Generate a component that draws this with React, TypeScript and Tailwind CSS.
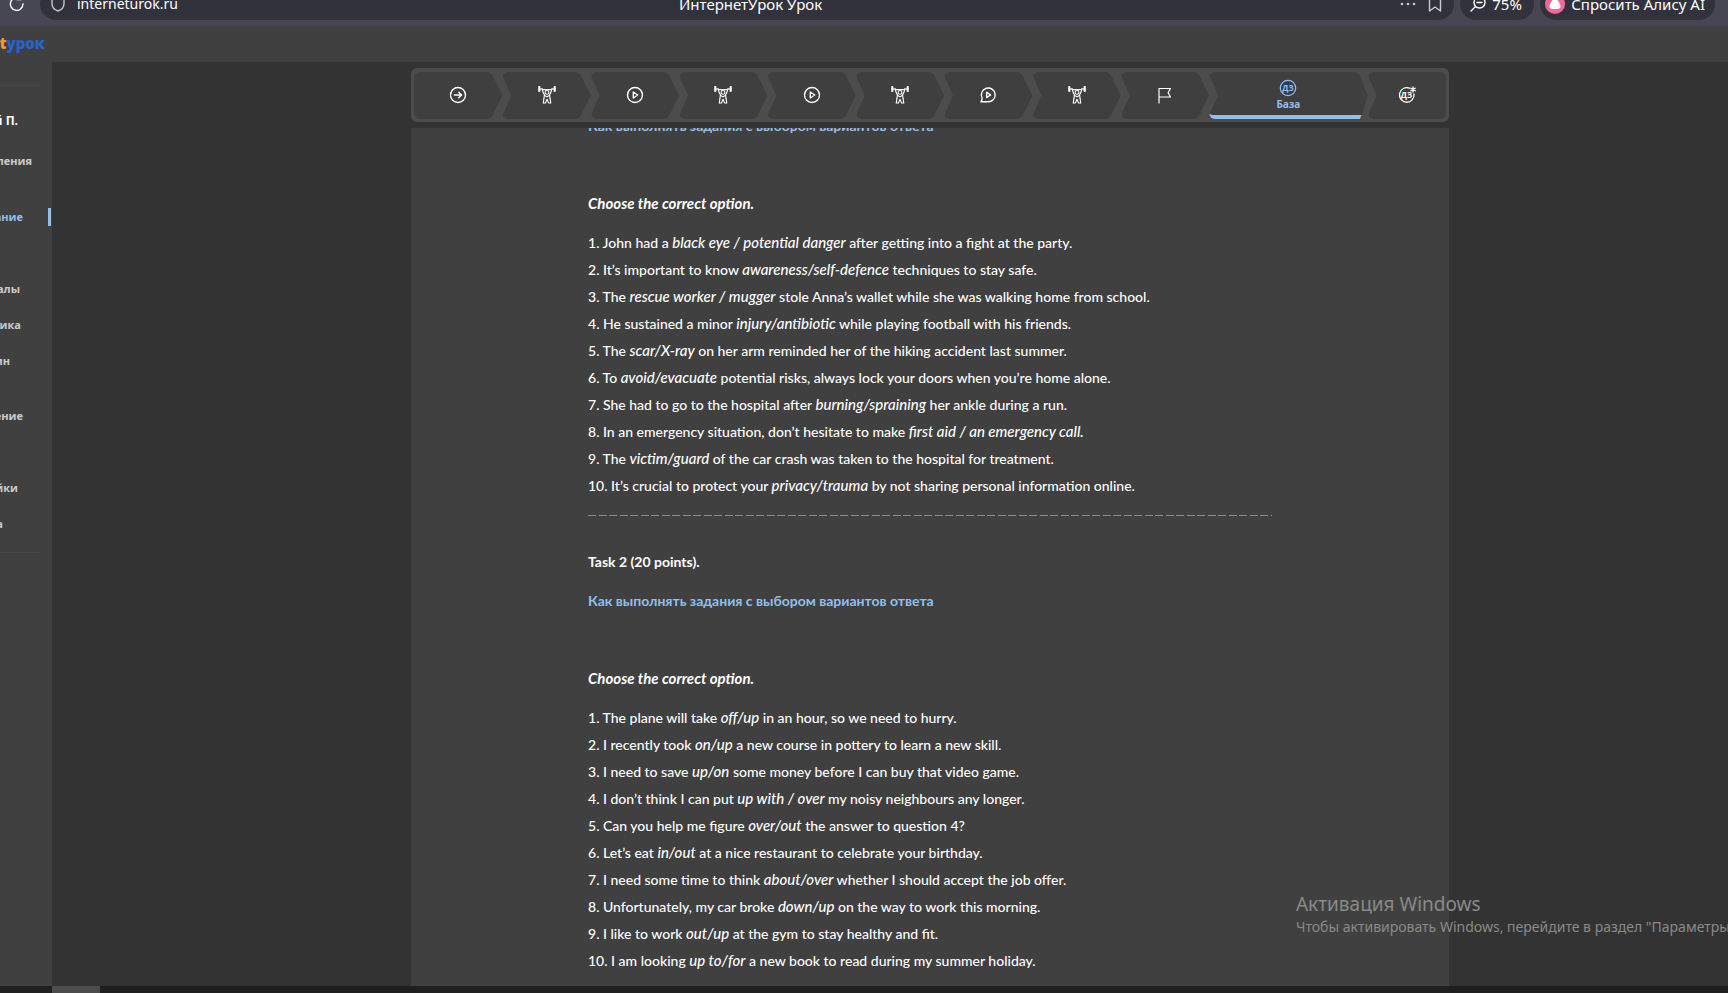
import React from "react";

type Part = [string, string, string];

const taskOne: Part[] = [
  ["John had a ", "black eye / potential danger", " after getting into a fight at the party."],
  ["It’s important to know ", "awareness/self-defence", " techniques to stay safe."],
  ["The ", "rescue worker / mugger", " stole Anna’s wallet while she was walking home from school."],
  ["He sustained a minor ", "injury/antibiotic", " while playing football with his friends."],
  ["The ", "scar/X-ray", " on her arm reminded her of the hiking accident last summer."],
  ["To ", "avoid/evacuate", " potential risks, always lock your doors when you’re home alone."],
  ["She had to go to the hospital after ", "burning/spraining", " her ankle during a run."],
  ["In an emergency situation, don’t hesitate to make ", "first aid / an emergency call.", ""],
  ["The ", "victim/guard", " of the car crash was taken to the hospital for treatment."],
  ["It’s crucial to protect your ", "privacy/trauma", " by not sharing personal information online."],
];

const taskTwo: Part[] = [
  ["The plane will take ", "off/up", " in an hour, so we need to hurry."],
  ["I recently took ", "on/up", " a new course in pottery to learn a new skill."],
  ["I need to save ", "up/on", " some money before I can buy that video game."],
  ["I don’t think I can put ", "up with / over", " my noisy neighbours any longer."],
  ["Can you help me figure ", "over/out", " the answer to question 4?"],
  ["Let’s eat ", "in/out", " at a nice restaurant to celebrate your birthday."],
  ["I need some time to think ", "about/over", " whether I should accept the job offer."],
  ["Unfortunately, my car broke ", "down/up", " on the way to work this morning."],
  ["I like to work ", "out/up", " at the gym to stay healthy and fit."],
  ["I am looking ", "up to/for", " a new book to read during my summer holiday."],
];

const stroke = {
  fill: "none",
  stroke: "currentColor",
  strokeWidth: 1.4,
  strokeLinecap: "round" as const,
  strokeLinejoin: "round" as const,
};

function ArrowIcon() {
  return (
    <svg viewBox="0 0 18 18" className="size-[18px]" {...stroke}>
      <circle cx="9" cy="9" r="7.5" />
      <path d="M5.5 9h7M9.8 6.2 12.6 9l-2.8 2.8" />
    </svg>
  );
}

function PlayIcon() {
  return (
    <svg viewBox="0 0 18 18" className="size-[18px]" {...stroke}>
      <circle cx="9" cy="9" r="7.5" />
      <path d="M7.3 6v6l4.4-3z" />
    </svg>
  );
}

function ChatPlayIcon() {
  return (
    <svg viewBox="0 0 18 18" className="size-[18px]" {...stroke}>
      <path d="M2 15.8h7.2A6.9 6.9 0 1 0 3 11.8c.3 1.4-.2 2.8-1 4z" />
      <path d="M7.6 6.2v5.4l4-2.7z" />
    </svg>
  );
}

function LifterIcon() {
  return (
    <svg viewBox="0 0 18 18" className="size-[18px]" {...stroke} strokeWidth={1.1}>
      <path d="M1.3 1v4M16.700 1v4" strokeWidth="2.200" />
      <path d="M2 3h2.200M13.800 3H16" />
      <path d="M4 2.600l1.200 4 1.200 2-.4 3.600M14 2.600l-1.200 4-1.200 2 .4 3.600M5.400 3.600h7.200" />
      <circle cx="9" cy="6.400" r="1.900" />
      <path d="M6 12.200L5.200 17h2.200L9 13.200l1.600 3.800h2.200L12 12.200M6.600 9.600 9 10.800l2.400-1.200" />
    </svg>
  );
}

function FlagIcon() {
  return (
    <svg viewBox="0 0 18 18" className="size-[18px]" {...stroke} strokeWidth={1.2}>
      <path d="M3 17V2.500h11.500l-2.400 4.200 2.400 4.300H3" />
    </svg>
  );
}

function HomeworkIcon() {
  return (
    <svg viewBox="0 0 18 18" className="size-[18px]" {...stroke} strokeWidth={1.2}>
      <circle cx="9" cy="9" r="7.700" fill="#2f3b52" />
      <text x="9" y="12" textAnchor="middle" fontSize="8" fontWeight="700" fontFamily="Open Sans, sans-serif" fill="currentColor" stroke="none">ДЗ</text>
    </svg>
  );
}

function HomeworkStarIcon() {
  return (
    <svg viewBox="0 0 18 18" className="size-[18px]" {...stroke} strokeWidth={1.3}>
      <path d="M11.500 2.200A7.300 7.300 0 1 0 16 8" />
      <path d="M15 1v5M12.800 2.200l4.400 2.600M17.200 2.200l-4.400 2.600" />
      <text x="8.500" y="12.200" textAnchor="middle" fontSize="8" fontWeight="700" fontFamily="Open Sans, sans-serif" fill="currentColor" stroke="none">ДЗ</text>
    </svg>
  );
}

const steps = [
  { label: "Введение", icon: <ArrowIcon /> },
  { label: "Тренажёр 1", icon: <LifterIcon /> },
  { label: "Видео 1", icon: <PlayIcon /> },
  { label: "Тренажёр 2", icon: <LifterIcon /> },
  { label: "Видео 2", icon: <PlayIcon /> },
  { label: "Тренажёр 3", icon: <LifterIcon /> },
  { label: "Диалог", icon: <ChatPlayIcon /> },
  { label: "Тренажёр 4", icon: <LifterIcon /> },
  { label: "Итог", icon: <FlagIcon /> },
  { label: "База", icon: <HomeworkIcon />, active: true },
  { label: "Домашнее задание повышенной сложности", icon: <HomeworkStarIcon /> },
];

const chevronFirst =
  "[clip-path:polygon(0_0,calc(100%-14px)_0,calc(100%-10px)_3px,100%_50%,calc(100%-10px)_calc(100%-3px),calc(100%-14px)_100%,0_100%)]";
const chevron =
  "[clip-path:polygon(0_3px,4px_0,calc(100%-14px)_0,calc(100%-10px)_3px,100%_50%,calc(100%-10px)_calc(100%-3px),calc(100%-14px)_100%,4px_100%,0_calc(100%-3px),9px_50%)]";
const chevronActive =
  "[clip-path:polygon(0_3px,4px_0,calc(100%-12px)_0,calc(100%-8px)_3px,100%_50%,calc(100%-6px)_calc(100%-4px),calc(100%-8px)_100%,3px_100%,0_calc(100%-4px),9px_50%)]";
const chevronLast =
  "[clip-path:polygon(0_3px,4px_0,100%_0,100%_100%,4px_100%,0_calc(100%-3px),9px_50%)]";

function Stepper() {
  return (
    <nav className="grid h-[54px] grid-cols-[repeat(9,88fr)_158fr_78fr] rounded-md bg-[#4c4c4c] px-[3px] pt-1 pb-[3px]">
      {steps.map((s, i) => (
        <button
          key={i}
          aria-label={s.label}
          className={`flex flex-col items-center justify-center rounded-md bg-[#3f3f3f] ${
            i === 0 ? chevronFirst : i === steps.length - 1 ? chevronLast : s.active ? chevronActive : chevron
          } ${s.active ? "border-b-4 border-[#94bfe8] pt-[2px] text-[#94bfe8]" : "pb-[2px] text-white"}`}
        >
          {s.icon}
          {s.active && <span className="text-[10px] leading-[14px] font-bold">{s.label}</span>}
        </button>
      ))}
    </nav>
  );
}

function Questions({ items }: { items: Part[] }) {
  return (
    <ol className="mt-3 font-medium">
      {items.map(([before, choice, after], i) => (
        <li key={i} className="h-[27px]">
          {i + 1}. {before}
          <em className="text-[15px]">{choice}</em>
          {after}
        </li>
      ))}
    </ol>
  );
}

function HelpLink() {
  return (
    <a href="#help" className="font-bold text-[#94bfe8]">
      Как выполнять задания с выбором вариантов ответа
    </a>
  );
}

function BrowserBar() {
  return (
    <div className="h-[26px] shrink-0 overflow-hidden bg-[#474753] font-['Noto_Sans',sans-serif] text-[15px] leading-5 text-white">
      <div className="-mt-3 flex h-8 items-stretch gap-[6px] pr-[13px]">
        <button aria-label="Обновить" className="flex w-[34px] items-center justify-center">
          <svg viewBox="0 0 16 16" className="size-4" {...stroke}>
            <path d="M14 8A6.300 6.300 0 1 1 11.500 3M11.800 0v3.600H8" />
          </svg>
        </button>
        <div className="flex flex-1 items-center gap-3 rounded-full bg-[#32323c] pl-[11px] pr-3">
          <svg viewBox="0 0 14 16" className="h-4 w-[14px] text-[#c8c8d0]" {...stroke}>
            <path d="M7 1l6 1.500v5c0 4-3 6.500-6 7.500-3-1-6-3.500-6-7.500v-5z" />
          </svg>
          <span className="w-[590px] text-[14px]">interneturok.ru</span>
          <span className="flex-1">ИнтернетУрок Урок</span>
          <button aria-label="Ещё" className="text-[#c8c8d0]">
            <svg viewBox="0 0 16 4" className="h-1 w-4" fill="currentColor">
              <circle cx="2" cy="2" r="1.300" />
              <circle cx="8" cy="2" r="1.300" />
              <circle cx="14" cy="2" r="1.300" />
            </svg>
          </button>
          <button aria-label="Закладка" className="text-[#c8c8d0]">
            <svg viewBox="0 0 14 18" className="h-[18px] w-[14px]" {...stroke}>
              <path d="M1.500 1h11v15L7 12l-5.500 4z" />
            </svg>
          </button>
        </div>
        <button className="flex w-[74px] items-center gap-[6px] rounded-full bg-[#32323c] pl-[10px]">
          <svg viewBox="0 0 16 16" className="size-4" {...stroke}>
            <circle cx="9.500" cy="6.500" r="5.500" />
            <path d="M5.500 10.500L1 15M7 6.500h5" />
          </svg>
          75%
        </button>
        <button className="flex items-center gap-[6px] rounded-full bg-[#32323c] pr-[10px] pl-[5px]">
          <svg viewBox="0 0 20 20" className="size-5">
            <circle cx="10" cy="10" r="10" fill="#ef6a9b" />
            <path d="M10 4c2 0 6 7 5.500 9S13 15 10 15s-5 0-5.500-2S8 4 10 4z" fill="#fff" />
          </svg>
          Спросить Алису AI
        </button>
      </div>
    </div>
  );
}

const menu = [
  { text: "Дмитрий П.", box: "mt-[25px] text-[12px] text-white pr-[34px]" },
  { text: "Уведомления", box: "mt-5 pr-5" },
  { text: "Расписание", box: "mt-9 text-[#94bfe8] pr-[29px]", active: true },
  { text: "Материалы", box: "mt-[52px] pr-8" },
  { text: "Статистика", box: "mt-4 pr-[31px]" },
  { text: "Магазин", box: "mt-4 pr-[42px]" },
  { text: "Обучение", box: "mt-[35px] pr-[29px]" },
  { text: "Настройки", box: "mt-[52px] pr-[34px]" },
  { text: "Справка", box: "mt-4 pr-[49px]" },
];

export default function App() {
  return (
    <div className="flex h-screen flex-col overflow-hidden bg-[#333333] font-['Open_Sans',sans-serif] text-white">
      <BrowserBar />
      <header className="flex h-9 shrink-0 items-center bg-[#404040] pb-[2px] text-[15px] leading-5 font-extrabold">
        <div className="flex w-[45px] justify-end whitespace-nowrap">
          <span className="text-[#f59a32]">internet</span>
          <span className="text-[#2464c8]">урок</span>
        </div>
      </header>
      <div className="flex min-h-0 flex-1">
        <aside className="w-[52px] shrink-0 overflow-hidden bg-[#404040] text-[11px] leading-5 font-bold text-[#cccccc]">
          <hr className="mt-[23px] mr-3 border-[#474747]" />
          {menu.map((m) => (
            <a
              key={m.text}
              href="#menu"
              className={`flex h-5 justify-end whitespace-nowrap ${m.box} ${
                m.active ? "bg-[linear-gradient(#94bfe8,#94bfe8)] bg-[length:3px_18px] bg-[position:48px_center] bg-no-repeat" : ""
              }`}
            >
              {m.text}
            </a>
          ))}
          <hr className="mt-[18px] mr-3 border-[#474747]" />
        </aside>
        <main className="flex min-w-0 flex-1 justify-center pl-20">
          <div className="flex w-[1038px] flex-col pt-[6px]">
            <Stepper />
            <section className="mt-[6px] flex min-h-0 flex-1 flex-col justify-end overflow-hidden bg-[#404040] px-[177px] pb-3 font-[Lato,sans-serif] text-[14px] leading-[27px]">
              <p><HelpLink /></p>
              <p className="mt-[51px] text-[15px] font-bold italic">Choose the correct option.</p>
              <Questions items={taskOne} />
              <hr className="mt-4 h-px shrink-0 border-0 bg-[repeating-linear-gradient(90deg,#8c8c8c_0_8px,transparent_8px_11px,#8c8c8c_11px_19px,transparent_19px_21px)]" />
              <p className="mt-8 font-bold">Task 2 (20 points).</p>
              <p className="mt-3"><HelpLink /></p>
              <p className="mt-[51px] text-[15px] font-bold italic">Choose the correct option.</p>
              <Questions items={taskTwo} />
            </section>
          </div>
        </main>
      </div>
      <div className="h-[7px] shrink-0 bg-[#1f1f1f] pl-[52px]">
        <div className="h-full w-12 bg-[#4c4c4c]" />
      </div>
      <div className="pointer-events-none absolute top-[892px] left-[1296px] w-[432px] overflow-hidden font-['Noto_Sans',sans-serif] whitespace-nowrap text-[#8a8a8a]">
        <p className="text-[19px] leading-6">Активация Windows</p>
        <p className="text-[14px] leading-[22px]">Чтобы активировать Windows, перейдите в раздел "Параметры".</p>
      </div>
    </div>
  );
}
